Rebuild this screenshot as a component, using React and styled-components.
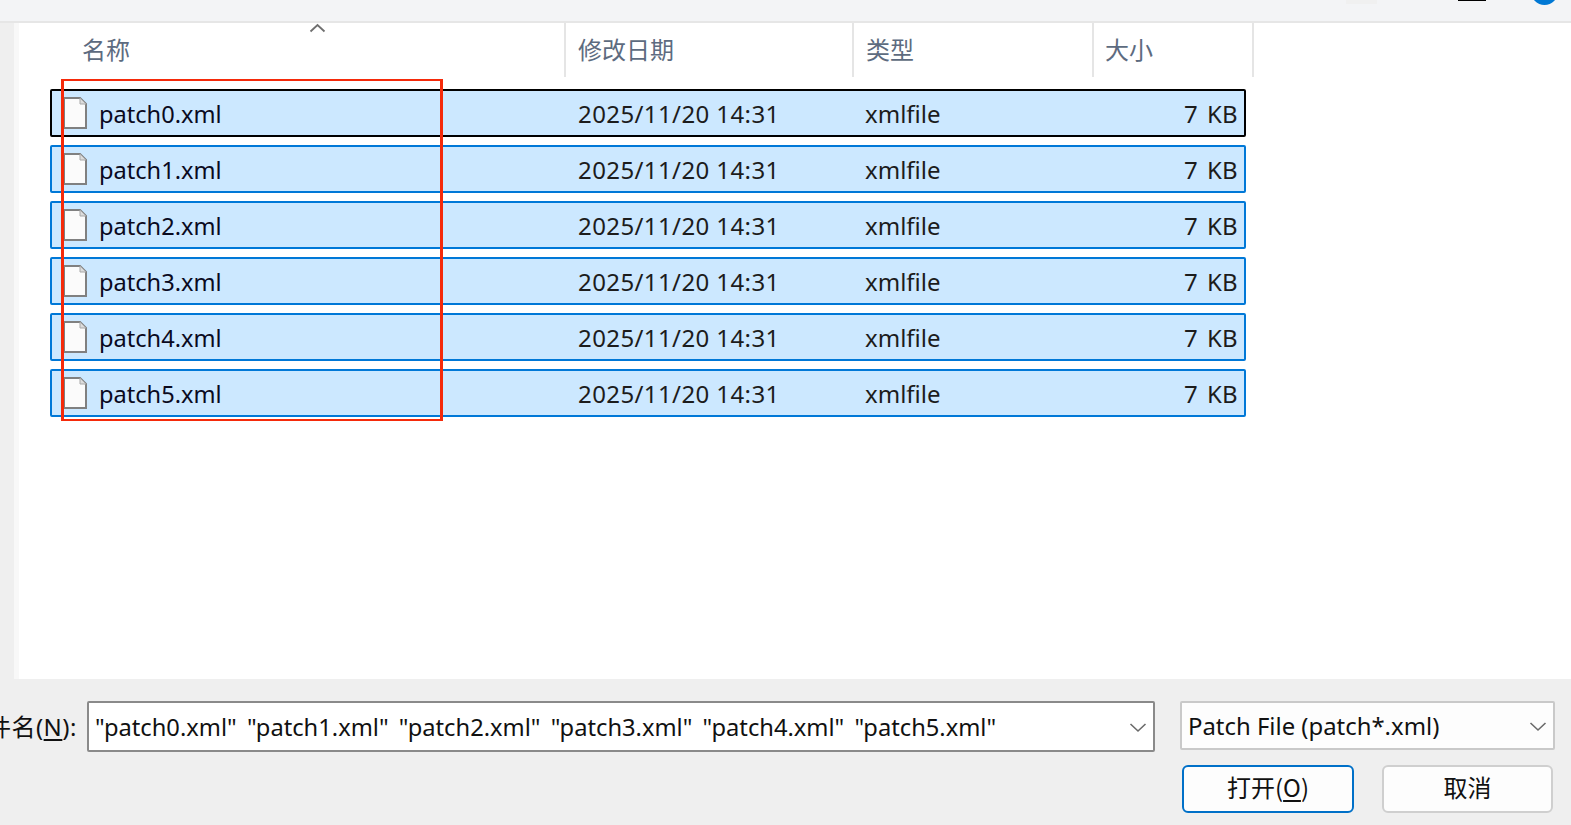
import React from "react";
import styled, { createGlobalStyle } from "styled-components";

const Global = createGlobalStyle`
  html, body { margin: 0; padding: 0; background: #efefef; overflow: hidden; }
  body { font-family: "Noto Sans", "Noto Sans CJK SC", "Liberation Sans", sans-serif; }
`;
const Page = styled.div`
  width: 1571px; height: 825px; display: flex; flex-direction: column; overflow: hidden; position: relative;
`;
const TopBar = styled.div`
  height: 21px; flex: none; background: #f3f4f6; border-bottom: 2px solid #e6e6e6; position: relative; overflow: hidden;
`;
const TopPatch = styled.div`
  position: absolute; top: 0; left: 1346px; width: 31px; height: 4px; background: #f0f0f0;
`;
const TopLine = styled.div`
  position: absolute; top: 0; left: 1458px; width: 28px; height: 1px; background: #000;
`;
const TopDot = styled.div`
  position: absolute; top: -22px; left: 1531px; width: 27px; height: 27px; border-radius: 50%; background: #0078d4;
`;
const Middle = styled.div`
  flex: none; height: 656px; display: flex; background: #efefef;
`;
const Pane = styled.div`
  margin-left: 14px; flex: 1; background: #fff; border-left: 5px solid #f8f8f8; position: relative; padding-left: 31px;
`;
const Header = styled.div`
  display: grid; grid-template-columns: 516px 288px 240px 160px; height: 54px; position: relative;
`;
const HeaderCell = styled.div`
  font-size: 24px; color: #5d6b80; height: 54px; line-height: 51px; box-sizing: border-box;
  padding-left: ${p => p.$pad}px; border-right: 2px solid #e5e5e5;
  font-family: "Noto Sans CJK SC", sans-serif; font-weight: 400;
`;
const SortCaret = styled.svg`
  position: absolute; left: 259px; top: 0; width: 17px; height: 10px;
`;
const List = styled.div`
  margin-top: 12px; display: flex; flex-direction: column; gap: 8px; width: 1196px;
`;
const Row = styled.div`
  height: 48px; box-sizing: border-box; background: #cce8ff; border: 2px solid ${p => p.$focus ? "#000" : "#0078d7"};
  border-radius: 2px; display: grid; grid-template-columns: 514px 288px 240px 1fr; align-items: center;
  font-size: 24px; color: #1c1c1c; padding-right: 6px;
`;
const NameCell = styled.div`
  display: flex; align-items: center; gap: 12px; padding-left: 11px; color: #0a0a1e; font-size: 23.6px;
`;
const NameText = styled.span`
  padding-top: 2px;
`;
const DateCell = styled.div`
  padding-left: 12px; letter-spacing: 0.4px;
`;
const TypeCell = styled.div`
  padding-left: 11px;
`;
const SizeCell = styled.div`
  text-align: right; word-spacing: 2.5px; letter-spacing: 0.3px;
`;
const Highlight = styled.div`
  position: absolute; left: 61px; top: 79px; width: 382px; height: 342px; box-sizing: border-box;
  border-style: solid; border-color: #f52a0a; border-width: 2px 3px; pointer-events: none;
`;
const Bottom = styled.div`
  flex: 1; background: #efefef; display: flex; flex-direction: column; padding: 22px 16px 0 0; gap: 13px;
`;
const BottomRow = styled.div`
  display: flex; align-items: flex-start; justify-content: flex-end;
`;
const FieldLabel = styled.span`
  font-size: 24px; color: #111; flex: 1; min-width: 0; height: 48px; margin-right: 10px; letter-spacing: 0.5px;
  display: flex; align-items: center; justify-content: flex-end; white-space: nowrap; overflow: hidden;
  font-family: "Noto Sans", "Noto Sans CJK SC", sans-serif;
  u { text-underline-offset: 3px; }
`;
const Combo = styled.div`
  height: ${p => p.$h}px; box-sizing: border-box; width: ${p => p.$w}px; flex: none; border: 2px solid ${p => p.$dark ? "#8a8a8a" : "#c9c9c9"};
  border-radius: 2px; background: ${p => p.$dark ? "#fff" : "#fdfdfd"}; display: flex; align-items: center; justify-content: space-between;
  font-size: 23.9px; color: #111; padding: 0 6px; margin-right: ${p => p.$gap || 0}px; white-space: nowrap;
`;
const FileNames = styled.span`
  font-size: 23.7px; word-spacing: 4px;
`;
const Chevron = styled.svg`
  width: 18px; height: 11px; flex: none; margin-top: 2px;
`;
const Actions = styled.div`
  display: flex; gap: 28px; justify-content: flex-end; padding-right: 2px;
`;
const Button = styled.div`
  width: ${p => p.$w}px; height: 48px; box-sizing: border-box; border-radius: 6px; background: #fdfdfd;
  border: 2px solid ${p => p.$primary ? "#0070c8" : "#cfcfcf"}; display: flex; align-items: center; justify-content: center;
  font-size: 24px; color: #111; padding-bottom: 5px; font-family: "Noto Sans CJK SC", "Noto Sans", sans-serif;
  u { text-underline-offset: 3px; }
`;

function FileIcon() {
  return (
    <svg width="24" height="32" viewBox="0 0 24 32" style={{ flex: "none" }}>
      <path d="M1 1H17L23 7V31H1Z" fill="#fbfbfb" stroke="#808080" strokeWidth="2" />
      <path d="M17 1V7H23Z" fill="#dcdcdc" stroke="#a8a8a8" strokeWidth="1" />
    </svg>
  );
}
function Down() {
  return (
    <Chevron viewBox="0 0 18 11">
      <path d="M1.5 2L9 9L16.5 2" fill="none" stroke="#6a6a6a" strokeWidth="1.6" />
    </Chevron>
  );
}

const files = ["patch0.xml", "patch1.xml", "patch2.xml", "patch3.xml", "patch4.xml", "patch5.xml"];

export default function App() {
  return (
    <Page>
      <Global />
      <TopBar>
        <TopPatch />
        <TopLine />
        <TopDot />
      </TopBar>
      <Middle>
        <Pane>
          <Header>
            <HeaderCell $pad={32}>名称</HeaderCell>
            <HeaderCell $pad={12}>修改日期</HeaderCell>
            <HeaderCell $pad={12}>类型</HeaderCell>
            <HeaderCell $pad={11}>大小</HeaderCell>
            <SortCaret viewBox="0 0 17 10">
              <path d="M1.5 8.5L8.5 2L15.5 8.5" fill="none" stroke="#6f6f6f" strokeWidth="1.8" />
            </SortCaret>
          </Header>
          <List>
            {files.map((f, i) => (
              <Row key={f} $focus={i === 0}>
                <NameCell><FileIcon /><NameText>{f}</NameText></NameCell>
                <DateCell>2025/11/20 14:31</DateCell>
                <TypeCell>xmlfile</TypeCell>
                <SizeCell>7 KB</SizeCell>
              </Row>
            ))}
          </List>
        </Pane>
      </Middle>
      <Bottom>
        <BottomRow>
          <FieldLabel><span>件名(<u>N</u>):</span></FieldLabel>
          <Combo $dark $w={1068} $h={51} $gap={25}>
            <FileNames>"patch0.xml" "patch1.xml" "patch2.xml" "patch3.xml" "patch4.xml" "patch5.xml"</FileNames>
            <Down />
          </Combo>
          <Combo $w={375} $h={49}>
            <span>Patch File (patch*.xml)</span>
            <Down />
          </Combo>
        </BottomRow>
        <Actions>
          <Button $primary $w={172}><span>打开(<u>O</u>)</span></Button>
          <Button $w={171}>取消</Button>
        </Actions>
      </Bottom>
      <Highlight />
    </Page>
  );
}
